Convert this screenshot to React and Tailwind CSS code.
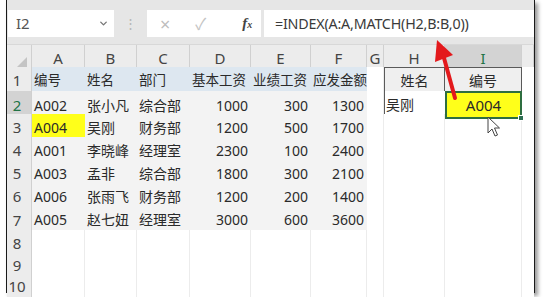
import { ChevronDown } from "lucide-react";

const letters = ["A", "B", "C", "D", "E", "F", "G", "H", "I", ""];

const rows = [
  ["编号", "姓名", "部门", "基本工资", "业绩工资", "应发金额"],
  ["A002", "张小凡", "综合部", "1000", "300", "1300"],
  ["A004", "吴刚", "财务部", "1200", "500", "1700"],
  ["A001", "李晓峰", "经理室", "2300", "100", "2400"],
  ["A003", "孟非", "综合部", "1800", "300", "2100"],
  ["A006", "张雨飞", "财务部", "1200", "200", "1400"],
  ["A005", "赵七妞", "经理室", "3000", "600", "3600"],
];

const heights = ["h-[24px]", "h-[23px]", "h-[23px]", "h-[23px]", "h-[23px]", "h-[24px]", "h-[23px]", "h-[22px]", "h-[21px]", "h-[19px]"];

const gridCols = "grid grid-cols-[25px_53px_52px_53px_61px_60px_56px_17px_61px_77px_12px]";

function RowHead({ n, active }) {
  return (
    <div
      className={`flex items-center justify-center pr-[4px] pt-[2px] border-r border-b border-[#d0d0d0] text-[15px] ${
        active ? "bg-[#d3d3d3] text-[#217346]" : "bg-[#ececec] text-[#444]"
      }`}
    >
      {n}
    </div>
  );
}

function tableCell(r, c, val) {
  const right = r > 0 && c >= 3;
  let cls = "flex items-center pt-[2px] whitespace-nowrap ";
  cls += right ? "justify-end pr-[3px] " : "pl-[2px] ";
  if (r === 0) cls += "text-[13.5px] bg-[#dde7f0] border-b-2 border-b-[#2b2b2b] ";
  else if (r === 6) cls += "bg-[#f3f3f3] border-b-2 border-b-[#1c1c1c] ";
  else cls += "bg-[#f3f3f3] border-b border-b-white ";
  if (r === 2 && c === 0) cls = cls.replace("bg-[#f3f3f3]", "bg-[#ffff1a]");
  return (
    <div key={c} className={cls}>
      {val}
    </div>
  );
}

function Blank({ className = "" }) {
  return <div className={`border-r border-b border-[#ececec] bg-white ${className}`} />;
}

export default function App() {
  return (
    <div className="relative w-[544px] h-[297px] bg-white overflow-hidden font-['Noto_Sans','Noto_Sans_CJK_SC',sans-serif] text-[14px] text-[#2a2a2a]">
      <div className="ml-[6px] w-[529px] h-[293px] border-l border-r border-b border-[#1a1a1a] bg-white shadow-[3px_3px_4px_rgba(0,0,0,0.4)] flex flex-col">
        {/* formula bar */}
        <div className="h-[44px] bg-[#e6e6e6] flex items-start pt-[10px] pl-[1px]">
          <div className="w-[106px] h-[27px] bg-white flex items-center justify-between pl-[8px] pr-[5px]">
            <span className="text-[15px] text-[#555]">I2</span>
            <ChevronDown className="w-[11px] h-[11px] text-[#777]" strokeWidth={3} />
          </div>
          <div className="w-[33px] h-[27px] flex items-center justify-center text-[#b5b5b5] text-[13px] leading-none">⋮</div>
          <div className="w-[114px] h-[27px] bg-white flex items-center pl-[13px] gap-[22px]">
            <span className="text-[#bdbdbd] text-[18px] leading-none">×</span>
            <span className="text-[#c4c4c4] text-[16px] leading-none ml-[3px]">✓</span>
            <span className="ml-[14px] text-[#444] italic font-['Liberation_Serif',serif] text-[15px] font-bold leading-none">
              f<span className="text-[10px]">x</span>
            </span>
          </div>
          <div className="ml-[3px] flex-1 h-[27px] bg-white flex items-center pl-[11px] text-[14.3px] text-[#3a3a3a] tracking-[-0.2px]">
            =INDEX(A:A,MATCH(H2,B:B,0))
          </div>
        </div>

        {/* column headers */}
        <div className={`${gridCols} h-[23px] border-t border-[#d8d8d8]`}>
          <div className="bg-[#ececec] border-r border-b border-[#d0d0d0] flex items-end justify-end pr-[4px] pb-[3px]">
            <div className="w-0 h-0 border-l-[10px] border-l-transparent border-b-[10px] border-b-[#c4c4c4]" />
          </div>
          {letters.map((l, i) => (
            <div
              key={i}
              className={`flex items-center justify-center pt-[2px] text-[15px] border-r border-b border-[#d0d0d0] ${
                l === "I" ? "bg-[#d3d3d3] text-[#217346]" : "bg-[#ececec] text-[#444]"
              }`}
            >
              {l}
            </div>
          ))}
        </div>

        {/* rows */}
        {heights.map((h, r) => (
          <div key={r} className={`${gridCols} ${h}`}>
            <RowHead n={r + 1} active={r === 1} />
            {r < 7 ? rows[r].map((v, c) => tableCell(r, c, v)) : [0, 1, 2, 3, 4, 5].map((c) => <Blank key={c} />)}
            <Blank />
            {r === 0 && (
              <>
                <div className="bg-[#efefef] border border-[#5a5a5a] flex items-center justify-center pt-[2px]">姓名</div>
                <div className="bg-[#efefef] border-t border-r border-b border-[#5a5a5a] flex items-center justify-center pt-[2px]">编号</div>
              </>
            )}
            {r === 1 && (
              <>
                <div className="bg-white border-l border-b border-[#5a5a5a] flex items-center pl-[1px] pt-[1px]">吴刚</div>
                <div className="relative bg-[#ffff1a] border-2 border-[#2e6e40] flex items-center justify-center text-[15px] pt-[1px]">
                  A004
                  <div className="absolute -right-[4px] -bottom-[4px] w-[6px] h-[6px] bg-[#2e6e52] border border-white" />
                </div>
              </>
            )}
            {r > 1 && (
              <>
                <Blank />
                <Blank />
              </>
            )}
            <Blank className="border-r-0" />
          </div>
        ))}
      </div>

      {/* red arrow and pointer */}
      <svg className="absolute left-0 top-0 pointer-events-none" width="544" height="297">
        <path d="M455 98 Q450 80 444 58" stroke="#e3191c" strokeWidth="4" fill="none" strokeLinecap="round" />
        <polygon points="437,40 453,55 435,62" fill="#e3191c" />
        <path
          d="M488 117 L488 133 L492 129 L495 136 L497.5 135 L494.5 128 L499.5 128 Z"
          fill="white"
          stroke="#444"
          strokeWidth="1"
          strokeLinejoin="round"
        />
      </svg>
    </div>
  );
}
